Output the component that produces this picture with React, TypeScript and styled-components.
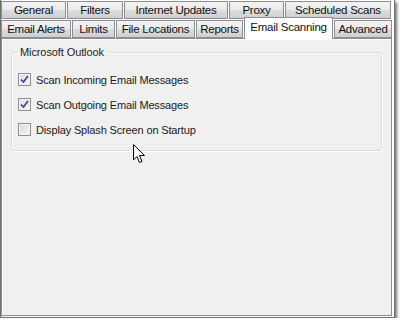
import React from "react";
import styled, { createGlobalStyle } from "styled-components";

const Global = createGlobalStyle`
  html, body { margin: 0; padding: 0; background: #ffffff; }
  body { font-family: "Liberation Sans", Arial, sans-serif; font-size: 11px; color: #000; }
`;

const Frame = styled.div`
  width: 392px;
  height: 316px;
  border: 1px solid #707070;
  border-top: none;
  box-shadow: 2px 2px 3px rgba(0, 0, 0, 0.55);
  background: #ffffff;
  display: flex;
  flex-direction: column;
  padding: 0 1px 1px 0;
`;

const TabRow = styled.div`
  display: flex;
  height: 19px;
  align-items: flex-end;
`;

const Tab = styled.div<{ $w: number; $active?: boolean }>`
  width: ${(p) => p.$w}px;
  height: ${(p) => (p.$active ? 22 : 18)}px;
  margin-right: 1px;
  box-sizing: border-box;
  border: 1px solid #8c8e94;
  border-bottom: ${(p) => (p.$active ? "none" : "1px solid #8c8e94")};
  background: ${(p) =>
    p.$active ? "#ffffff" : "linear-gradient(#f2f2f2 0%, #ebebeb 50%, #dddddd 51%, #cfcfcf 100%)"};
  display: flex;
  align-items: center;
  justify-content: center;
  font-size: 11.5px;
  color: #111;
  letter-spacing: -0.25px;
  white-space: nowrap;
  position: relative;
  z-index: ${(p) => (p.$active ? 2 : 1)};
  margin-bottom: ${(p) => (p.$active ? "-1px" : "0")};
  padding-bottom: ${(p) => (p.$active ? "3px" : "0")};
`;

const Panel = styled.div`
  flex: 1;
  border: 1px solid #8c8e94;
  background: #f0f0f0;
  box-shadow: inset 1px 1px 0 #ffffff;
  padding: 7px 9px 0 9px;
  margin-right: 1px;
`;

const Group = styled.fieldset`
  margin: 0;
  height: 105px;
  box-sizing: border-box;
  border: 1px solid #d5dfe5;
  border-radius: 3px;
  padding: 14px 6px 0 6px;
  box-shadow: inset 1px 1px 0 #ffffff, 1px 1px 0 #ffffff;
  display: flex;
  flex-direction: column;
  gap: 10px;
`;

const Legend = styled.legend`
  padding: 0 2px;
  margin-left: 0;
  font-size: 11px;
  color: #222;
  letter-spacing: -0.1px;
`;

const Row = styled.label`
  display: flex;
  align-items: center;
  height: 15px;
  gap: 5px;
  font-size: 11px;
  letter-spacing: -0.15px;
  color: #1a1a1a;
`;

const Box = styled.span`
  width: 13px;
  height: 13px;
  box-sizing: border-box;
  border: 1px solid #8f8f8f;
  background: linear-gradient(135deg, #dcdcdc 0%, #f6f6f6 100%);
  box-shadow: inset 0 0 0 1px #f4f4f4;
  display: flex;
  align-items: center;
  justify-content: center;
`;

const Cursor = styled.svg`
  position: absolute;
  left: 133px;
  top: 144px;
`;

const Check = () => (
  <svg width="9" height="9" viewBox="0 0 9 9">
    <path d="M1 4.5 L3.5 7 L8 1" fill="none" stroke="#3a3fa0" strokeWidth="1.6" />
  </svg>
);

export default function App() {
  const row1 = [
    { t: "General", w: 65 },
    { t: "Filters", w: 56 },
    { t: "Internet Updates", w: 104 },
    { t: "Proxy", w: 55 },
    { t: "Scheduled Scans", w: 106 },
  ];
  const row2 = [
    { t: "Email Alerts", w: 70 },
    { t: "Limits", w: 43 },
    { t: "File Locations", w: 79 },
    { t: "Reports", w: 47 },
    { t: "Email Scanning", w: 89, a: true },
    { t: "Advanced", w: 58 },
  ];
  return (
    <>
      <Global />
      <Frame>
        <TabRow>
          {row1.map((r) => (
            <Tab key={r.t} $w={r.w}>
              {r.t}
            </Tab>
          ))}
        </TabRow>
        <TabRow>
          {row2.map((r) => (
            <Tab key={r.t} $w={r.w} $active={r.a}>
              {r.t}
            </Tab>
          ))}
        </TabRow>
        <Panel>
          <Group>
            <Legend>Microsoft Outlook</Legend>
            <Row>
              <Box>
                <Check />
              </Box>
              Scan Incoming Email Messages
            </Row>
            <Row>
              <Box>
                <Check />
              </Box>
              Scan Outgoing Email Messages
            </Row>
            <Row>
              <Box />
              Display Splash Screen on Startup
            </Row>
          </Group>
        </Panel>
      </Frame>
      <Cursor width="13" height="20" viewBox="0 0 13 20">
        <path d="M0.5 0.5 L0.5 16 L4 12.5 L6.5 18.5 L9 17.5 L6.5 11.5 L11.5 11.5 Z" fill="#ffffff" stroke="#000" strokeWidth="1" />
      </Cursor>
    </>
  );
}
